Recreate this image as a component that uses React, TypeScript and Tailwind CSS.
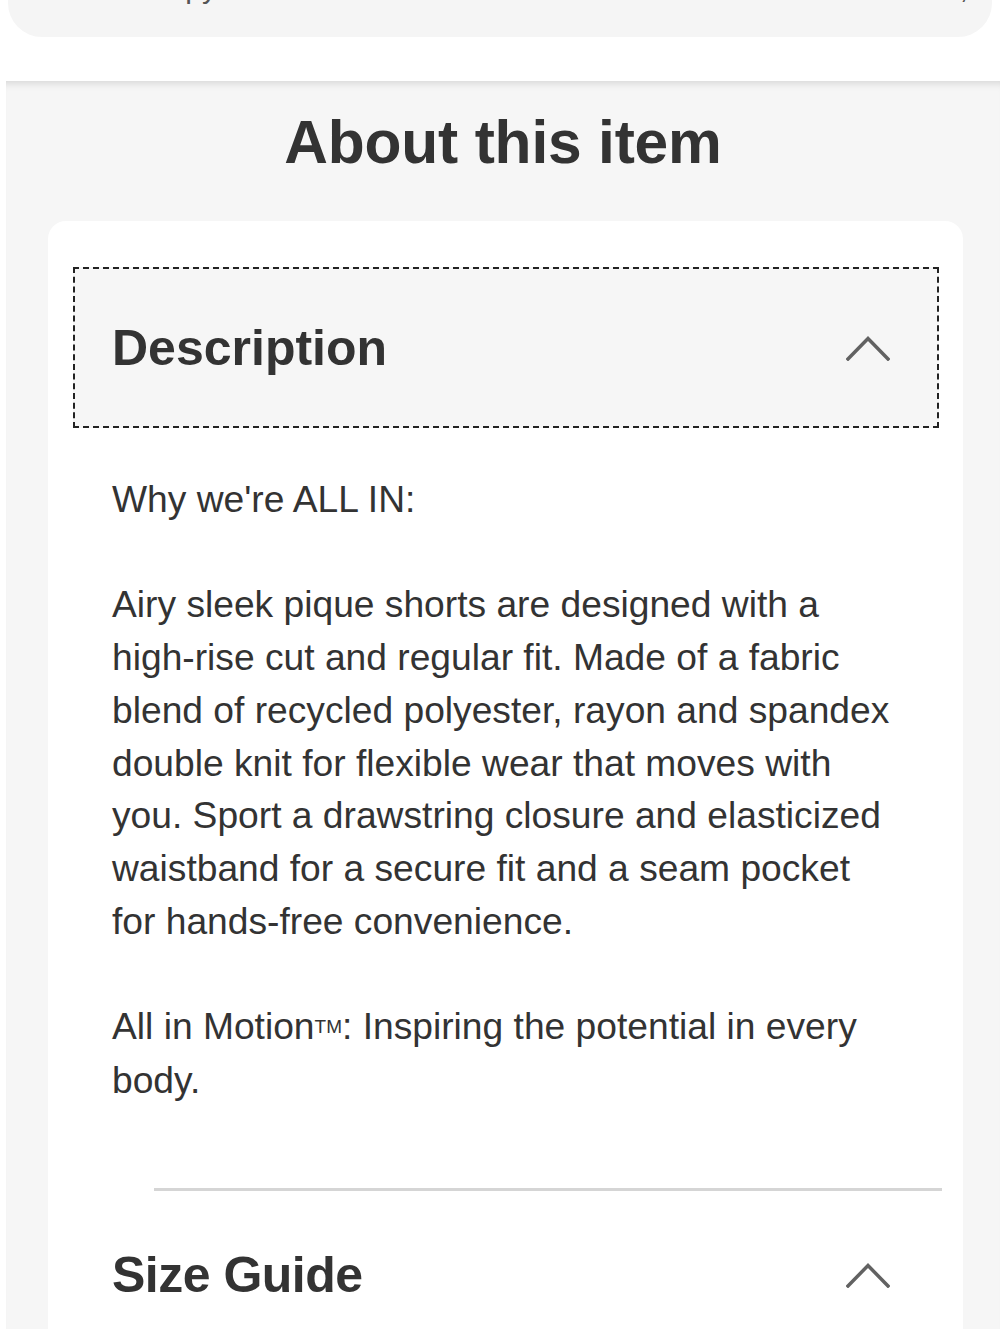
import React from 'react';

function ChevronUp({ className = '' }: { className?: string }) {
  return (
    <svg className={className} viewBox="0 0 44 26" fill="none" stroke="#626262" strokeWidth="3.5" strokeLinecap="square">
      <path d="M2 24 L22 3.5 L42 24" />
    </svg>
  );
}

const bodyLines = [
  "Why we're ALL IN:",
  '',
  'Airy sleek pique shorts are designed with a high-rise cut and regular fit. Made of a fabric blend of recycled polyester, rayon and spandex double knit for flexible wear that moves with you. Sport a drawstring closure and elasticized waistband for a secure fit and a seam pocket for hands-free convenience.',
  '',
];

export default function App() {
  return (
    <div className="min-h-[1329px] overflow-hidden bg-white font-['Liberation_Sans',Arial,sans-serif] text-[#333]">
      {/* bottom of the sticky purchase bar */}
      <div className="h-[81px] bg-white">
        <div className="mx-[8px] h-[37px] overflow-hidden rounded-b-[34px] bg-[#f5f5f5]">
          <div className="-mt-[27px] flex justify-between pl-[79px] pr-[24px] text-[30px] leading-[30px] text-[#555]">
            <span>Item copy</span>
            <span>,</span>
          </div>
        </div>
      </div>

      <section className="ml-[6px] bg-[#f6f6f6] pt-[31px] shadow-[inset_0_9px_9px_-7px_rgba(0,0,0,0.14)]">
        <h2 className="text-center text-[60.5px] font-bold leading-[60px] tracking-[-0.2px] text-[#333]">
          About this item
        </h2>

        <div className="ml-[42px] mt-[49px] w-[915px] rounded-t-[18px] bg-white pb-10 pl-[25px] pr-[24px] pt-[46px]">
          <button className="flex h-[161px] w-full items-center justify-between border-2 border-dashed border-[#222] bg-[#f6f6f6] pl-[37px] pr-[47px] text-left">
            <span className="text-[50px] font-bold leading-[50px] text-[#333]">Description</span>
            <ChevronUp className="h-[26px] w-[44px]" />
          </button>

          <div className="mt-[45px] w-[825px] pl-[39px] text-[37.2px] leading-[52.7px] text-[#333]">
            {bodyLines.map((line, i) => (
              <p key={i}>{line || '\u00a0'}</p>
            ))}
            <p>
              All in Motion<span className="text-[19px] align-[6px]">TM</span>: Inspiring the potential in every body.
            </p>
          </div>

          <div className="ml-[81px] mr-[-3px] mt-[82px] h-[3px] bg-[#d5d5d5]" />

          <div className="flex h-[168px] items-center justify-between pl-[39px] pr-[49px]">
            <span className="text-[50px] font-bold leading-[50px] tracking-[-0.5px] text-[#333]">Size Guide</span>
            <ChevronUp className="h-[26px] w-[44px]" />
          </div>
        </div>
      </section>
    </div>
  );
}
